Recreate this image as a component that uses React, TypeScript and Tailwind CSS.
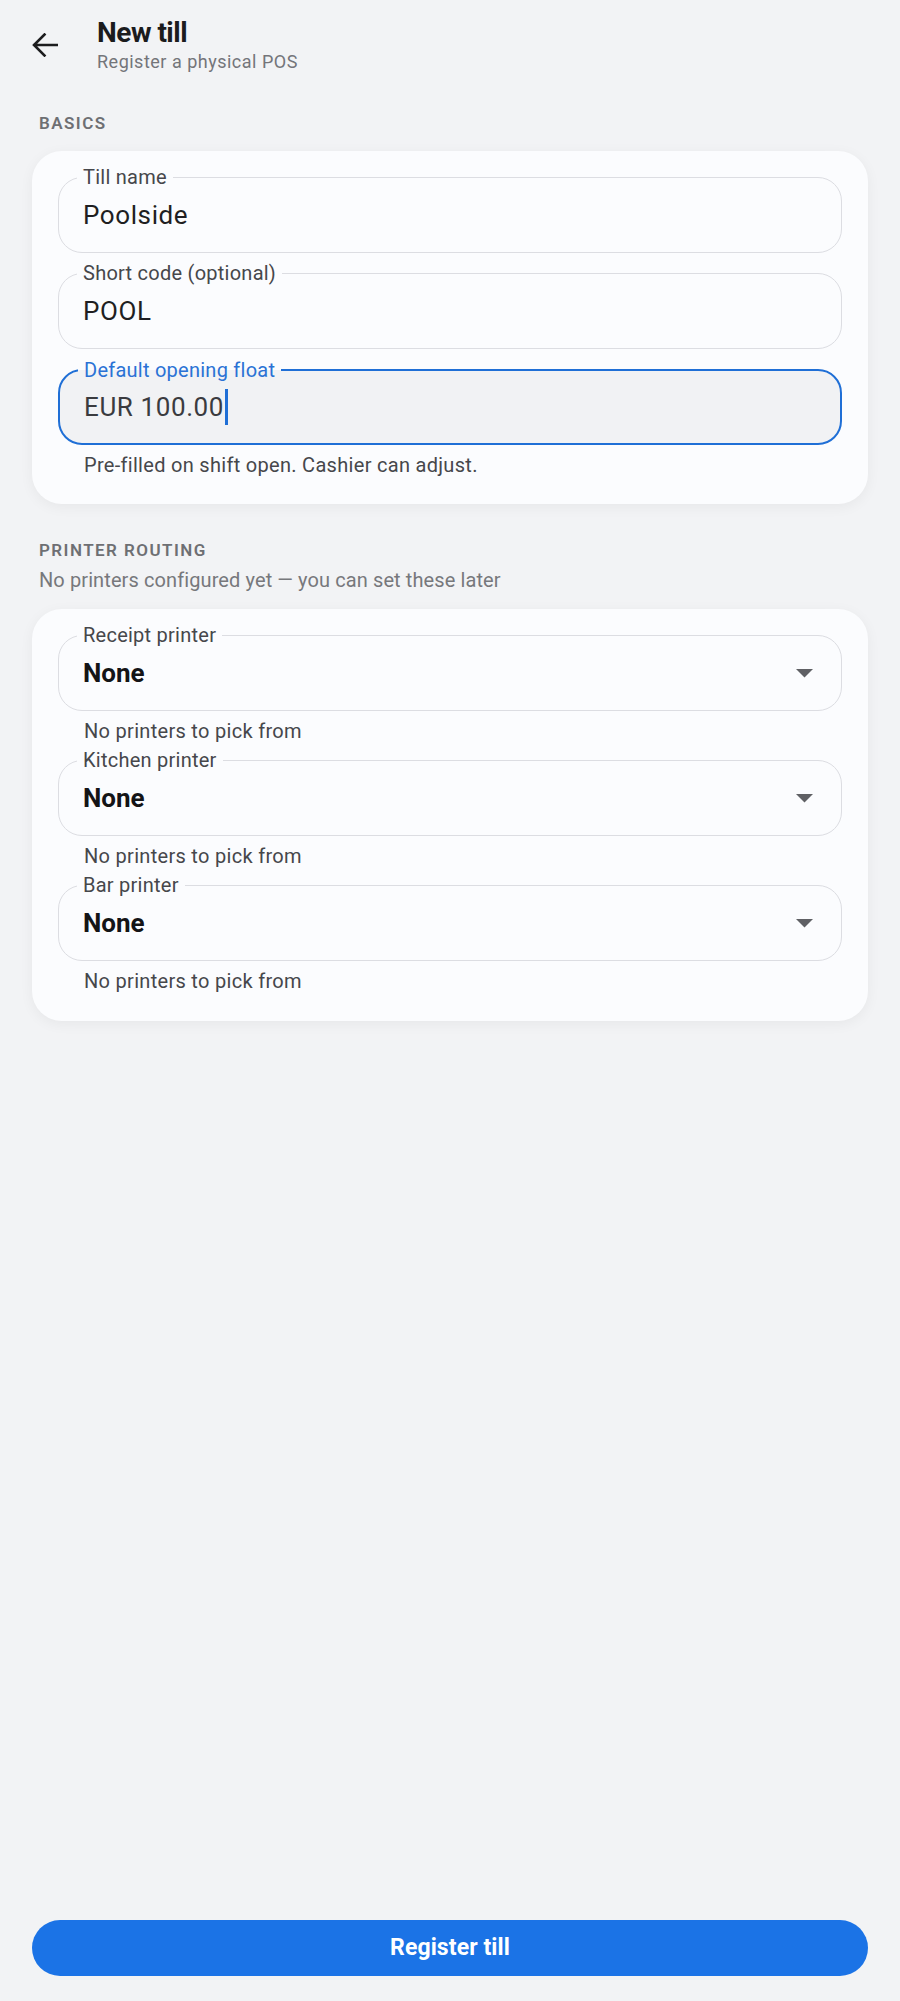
import React from 'react';
import clsx from 'clsx';

type FieldProps = {
  label: string;
  value: string;
  focused?: boolean;
  select?: boolean;
};

const Field: React.FC<FieldProps> = ({ label, value, focused, select }) => {
  return (
    <div
      className={clsx(
        'relative h-[76px] rounded-[24px] flex items-center pl-[24px]',
        focused ? 'border-2 border-[#1f6fd6] bg-[#f1f2f4]' : 'border-[1.5px] border-[#dcdde2]'
      )}
    >
      {/* floating label sits in a notch of the outline */}
      <span
        className={clsx(
          'absolute -top-[11px] left-[18px] px-[6px] text-[20px] leading-[20px] tracking-[0.25px]',
          focused
            ? 'text-[#2a72d5] bg-[linear-gradient(to_bottom,#fbfcfe_50%,#f1f2f4_50%)]'
            : 'text-[#46474b] bg-[#fbfcfe]'
        )}
      >
        {label}
      </span>
      {select ? (
        <>
          <span className="text-[26px] leading-[32px] font-bold text-[#141416]">{value}</span>
          <svg className="ml-auto mr-[28px]" width="17" height="9" viewBox="0 0 17 9">
            <path d="M0 0 L17 0 L8.5 8.5 Z" fill="#5f6064" />
          </svg>
        </>
      ) : (
        <span className="flex items-center text-[26px] leading-[32px] tracking-[0.6px] text-[#1f1f22]">
          <span className={focused ? 'text-[#3a3b3f]' : ''}>{value}</span>
          {focused && <span className="ml-[1px] w-[3px] h-[36px] bg-[#1f6fd6]" />}
        </span>
      )}
    </div>
  );
};

const Helper: React.FC<{ children: React.ReactNode }> = ({ children }) => (
  <div className="mt-[8px] pl-[26px] text-[20px] leading-[24px] tracking-[0.3px] text-[#46474b]">
    {children}
  </div>
);

const SectionTitle: React.FC<{ children: React.ReactNode }> = ({ children }) => (
  <div className="pl-[7px] text-[17px] leading-[22px] font-semibold tracking-[1.45px] text-[#6e6f73]">
    {children}
  </div>
);

export default function App() {
  return (
    <div className="min-h-screen flex flex-col bg-[#f2f3f5] font-['Roboto',sans-serif]">
      {/* header */}
      <header className="flex items-start pt-[16px] pl-[32px]">
        <svg className="mt-[17px] shrink-0" width="26" height="24" viewBox="0 0 26 24" fill="none">
          <path
            d="M25 12 H2.5 M12.5 1.5 L2 12 L12.5 22.5"
            stroke="#1c1c1e"
            strokeWidth="2.6"
            strokeLinecap="square"
          />
        </svg>
        <div className="ml-[39px]">
          <h1 className="text-[28px] leading-[34px] font-bold tracking-[-0.5px] text-[#1b1b1d]">New till</h1>
          <p className="text-[18px] leading-[24px] tracking-[0.5px] text-[#74757a]">Register a physical POS</p>
        </div>
      </header>

      <main className="px-[32px]">
        <div className="mt-[38px]">
          <SectionTitle>BASICS</SectionTitle>
        </div>
        <section className="mt-[17px] rounded-[30px] bg-[#fbfcfe] shadow-[0_3px_14px_rgba(0,0,0,0.05)] px-[26px] pt-[26px] pb-[27px]">
          <div className="flex flex-col gap-[20px]">
            <Field label="Till name" value="Poolside" />
            <Field label="Short code (optional)" value="POOL" />
            <Field label="Default opening float" value="EUR 100.00" focused />
          </div>
          <Helper>Pre-filled on shift open. Cashier can adjust.</Helper>
        </section>

        <div className="mt-[35px]">
          <SectionTitle>PRINTER ROUTING</SectionTitle>
          <p className="mt-[7px] pl-[7px] text-[20px] leading-[24px] tracking-[0.1px] text-[#77787c]">
            No printers configured yet — you can set these later
          </p>
        </div>
        <section className="mt-[17px] rounded-[30px] bg-[#fbfcfe] shadow-[0_3px_14px_rgba(0,0,0,0.05)] px-[26px] pt-[26px] pb-[28px]">
          <div className="flex flex-col gap-[17px]">
            <div>
              <Field label="Receipt printer" value="None" select />
              <Helper>No printers to pick from</Helper>
            </div>
            <div>
              <Field label="Kitchen printer" value="None" select />
              <Helper>No printers to pick from</Helper>
            </div>
            <div>
              <Field label="Bar printer" value="None" select />
              <Helper>No printers to pick from</Helper>
            </div>
          </div>
        </section>
      </main>

      <div className="mt-auto px-[32px] pb-[25px]">
        <button
          type="button"
          className="w-full h-[56px] rounded-full bg-[#1b73e6] text-white text-[23px] font-bold tracking-[0.1px]"
        >
          Register till
        </button>
      </div>
    </div>
  );
}
